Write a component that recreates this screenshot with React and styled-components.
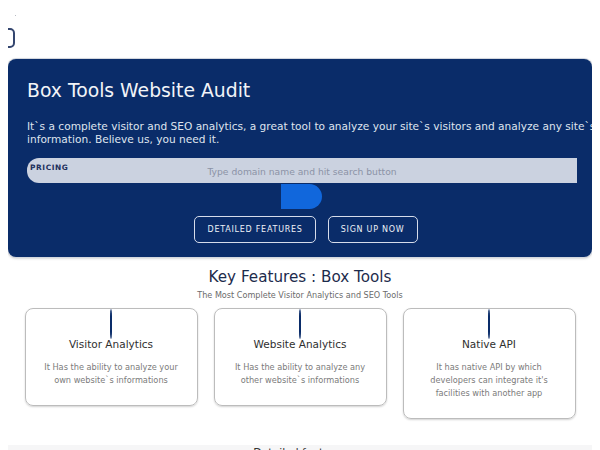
import React from "react";
import styled, { createGlobalStyle } from "styled-components";

const GlobalStyle = createGlobalStyle`
  html {
    overflow: hidden;
  }
  html, body {
    padding: 0;
    background: #ffffff;
  }
  body {
    margin: 8px;
    font-family: "DejaVu Sans", Verdana, sans-serif;
  }
`;

const navy = "#0a2c69";

const TopBar = styled.div`
  display: flow-root;
  height: 51px;
`;

const Dot = styled.span`
  display: block;
  width: 1px;
  height: 1px;
  margin: 7px 0 0 7px;
  background: #b8bcc4;
`;

const MenuToggle = styled.div`
  box-sizing: border-box;
  width: 26px;
  height: 20px;
  margin: 12px 0 0 -19px;
  border: 2px solid #34466f;
  border-radius: 5px;
`;

const Hero = styled.section`
  background: ${navy};
  border-radius: 8px;
  box-shadow: 0 0 0 1px #d3d7de, 0 1px 3px rgba(0, 0, 0, 0.3);
  padding: 21px 0 14px 19px;
  overflow: hidden;
  display: flex;
  flex-direction: column;
`;

const HeroTitle = styled.h1`
  margin: 0;
  font-size: 18.8px;
  font-weight: 400;
  color: #f2f4f8;
  line-height: 21px;
`;

const HeroText = styled.p`
  margin: 19px 0 0;
  font-size: 10.6px;
  line-height: 13px;
  color: #dfe4ee;
  white-space: nowrap;
`;

const SearchBox = styled.div`
  position: relative;
  width: 550px;
  height: 25px;
  margin-top: 12px;
  background: #cbd2e0;
  border-radius: 12px 0 0 12px;
  display: flex;
  align-items: center;
  justify-content: center;
`;

const SearchLabel = styled.span`
  position: absolute;
  left: 3px;
  top: 5px;
  font-size: 7.4px;
  font-weight: 700;
  letter-spacing: 0.6px;
  color: #1d2f5c;
`;

const Placeholder = styled.span`
  font-size: 9.2px;
  color: #8b93a6;
  margin-top: 1px;
`;

const SearchButton = styled.div`
  align-self: center;
  width: 41px;
  height: 25px;
  margin: 1px 0 0 -16px;
  background: #1167dc;
  border-radius: 0 14px 14px 0;
`;

const Actions = styled.div`
  display: flex;
  justify-content: center;
  margin: 7px 0 0 -19px;
`;

const OutlineButton = styled.button`
  margin-left: 12px;
  height: 27px;
  padding: 0 12px;
  background: transparent;
  border: 1px solid #d6dcea;
  border-radius: 5px;
  color: #eef1f7;
  font-family: "DejaVu Sans", Verdana, sans-serif;
  font-size: 8px;
  letter-spacing: 0.75px;
`;

const Features = styled.section`
  display: flex;
  flex-direction: column;
  align-items: center;
  padding-top: 10px;
`;

const SectionTitle = styled.h2`
  margin: 0;
  font-size: 15.2px;
  font-weight: 400;
  line-height: 20px;
  color: #1d2b4c;
`;

const SectionSub = styled.p`
  margin: 3px 0 0;
  font-size: 8.1px;
  line-height: 10px;
  color: #6b6b6b;
`;

const CardRow = styled.div`
  display: flex;
  align-items: flex-start;
  gap: 16px;
  margin-top: 8px;
`;

const Card = styled.article`
  width: 173px;
  box-sizing: border-box;
  border: 1px solid #bcbcbc;
  border-radius: 8px;
  box-shadow: 0 1px 2px rgba(0, 0, 0, 0.18);
  padding: 0 18px 18px;
  display: flex;
  flex-direction: column;
  align-items: center;
  text-align: center;
`;

const Stem = styled.span`
  display: block;
  width: 2px;
  height: 30px;
  background: ${navy};
  border-radius: 1px / 8px;
`;

const CardTitle = styled.h3`
  margin: -1px 0 0;
  font-size: 10.5px;
  font-weight: 400;
  line-height: 12px;
  color: #2f2f2f;
`;

const CardText = styled.p`
  margin: 11px 0 0;
  font-size: 8.2px;
  line-height: 13px;
  color: #7b7b7b;
`;

const DetailBand = styled.section`
  margin: 26px -8px 0;
  padding-top: 2px;
  background: #f6f6f7;
  text-align: center;
  height: 40px;
`;

const DetailTitle = styled.h2`
  margin: 0;
  font-size: 10.8px;
  line-height: 12px;
  font-weight: 400;
  color: #333;
`;

const cards = [
  {
    title: "Visitor Analytics",
    text: "It Has the ability to analyze your own website`s informations",
  },
  {
    title: "Website Analytics",
    text: "It Has the ability to analyze any other website`s informations",
  },
  {
    title: "Native API",
    text: "It has native API by which developers can integrate it's facilities with another app",
  },
];

export default function App() {
  return (
    <>
      <GlobalStyle />
      <TopBar>
        <Dot />
        <MenuToggle />
      </TopBar>
      <Hero>
        <HeroTitle>Box Tools Website Audit</HeroTitle>
        <HeroText>
          It`s a complete visitor and SEO analytics, a great tool to analyze
          your site`s visitors and analyze any site`s
          <br />
          information. Believe us, you need it.
        </HeroText>
        <SearchBox>
          <SearchLabel>PRICING</SearchLabel>
          <Placeholder>Type domain name and hit search button</Placeholder>
        </SearchBox>
        <SearchButton />
        <Actions>
          <OutlineButton>DETAILED FEATURES</OutlineButton>
          <OutlineButton>SIGN UP NOW</OutlineButton>
        </Actions>
      </Hero>
      <Features>
        <SectionTitle>Key Features : Box Tools</SectionTitle>
        <SectionSub>The Most Complete Visitor Analytics and SEO Tools</SectionSub>
        <CardRow>
          {cards.map((c) => (
            <Card key={c.title}>
              <Stem />
              <CardTitle>{c.title}</CardTitle>
              <CardText>{c.text}</CardText>
            </Card>
          ))}
        </CardRow>
      </Features>
      <DetailBand>
        <DetailTitle>Detailed features</DetailTitle>
      </DetailBand>
    </>
  );
}
